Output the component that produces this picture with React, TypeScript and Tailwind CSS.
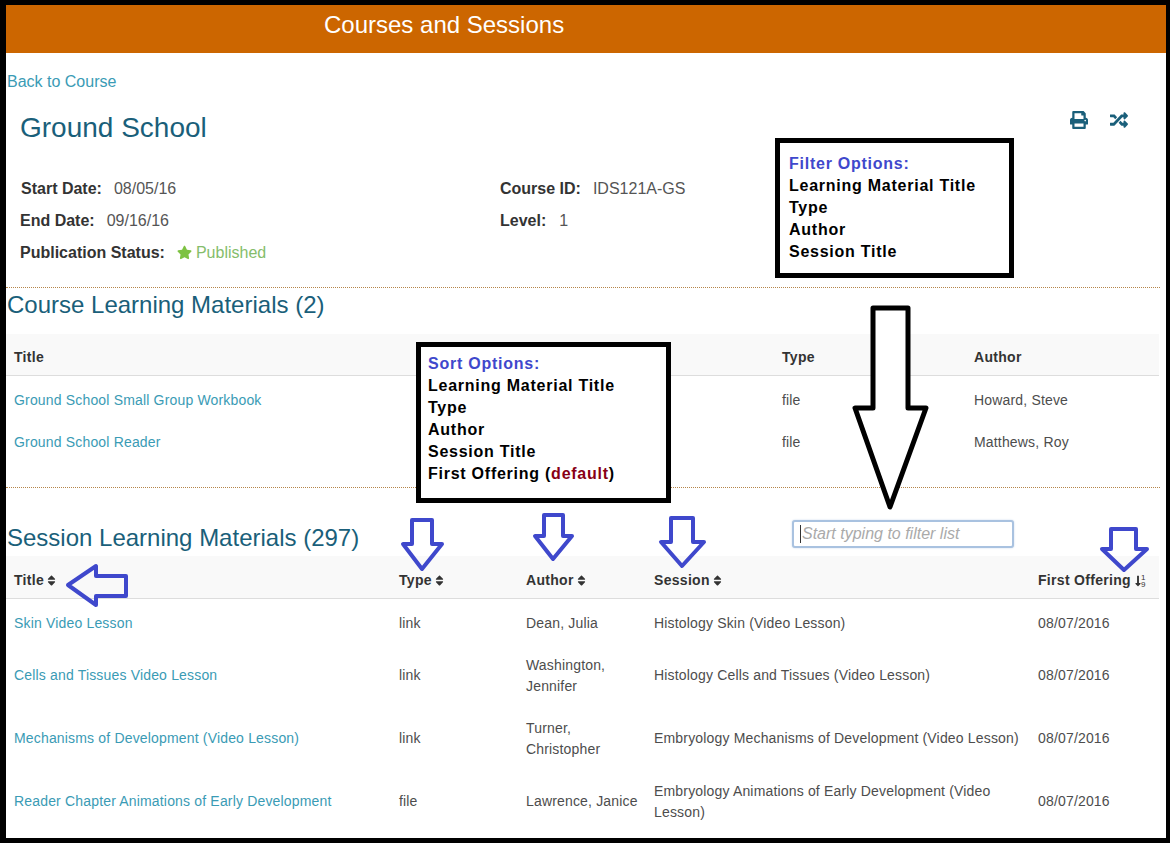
import React from 'react';
import { FaPrint, FaRandom, FaStar, FaSort, FaLongArrowAltDown } from 'react-icons/fa';

const courseMaterials = [
  { title: 'Ground School Small Group Workbook', type: 'file', author: 'Howard, Steve' },
  { title: 'Ground School Reader', type: 'file', author: 'Matthews, Roy' },
];

const sessionMaterials = [
  {
    title: 'Skin Video Lesson',
    type: 'link',
    author: 'Dean, Julia',
    session: 'Histology Skin (Video Lesson)',
    height: 'h-[50px]',
  },
  {
    title: 'Cells and Tissues Video Lesson',
    type: 'link',
    author: 'Washington, Jennifer',
    session: 'Histology Cells and Tissues (Video Lesson)',
    height: 'h-[54px]',
  },
  {
    title: 'Mechanisms of Development (Video Lesson)',
    type: 'link',
    author: 'Turner, Christopher',
    session: 'Embryology Mechanisms of Development (Video Lesson)',
    height: 'h-[72px]',
  },
  {
    title: 'Reader Chapter Animations of Early Development',
    type: 'file',
    author: 'Lawrence, Janice',
    session: 'Embryology Animations of Early Development (Video Lesson)',
    height: 'h-[54px]',
  },
];

function SortHeader({ label }: { label: string }) {
  return (
    <th className="px-2 pt-[8px] text-left font-bold tracking-[0.3px]">
      <span className="inline-flex items-center gap-[3px]">
        {label}
        <FaSort className="h-[13px] w-[9px] text-[#333]" />
      </span>
    </th>
  );
}

function Callout({ className, children }: { className: string; children: React.ReactNode }) {
  return (
    <div
      className={`absolute box-border border-[5px] border-black bg-white text-[16px] font-bold leading-[22px] tracking-[0.75px] text-black ${className}`}
    >
      {children}
    </div>
  );
}

export default function App() {
  return (
    <div className="relative box-border h-[843px] w-[1170px] overflow-hidden bg-black pb-[5px] pl-[6px] pr-[4px] pt-[5px] font-['Liberation_Sans',Arial,sans-serif] text-[14px] text-[#4d4d4d]">
      <div className="h-full overflow-hidden bg-white">
        <div className="flex h-[48px] items-center bg-[#cc6600] pb-[9px] pl-[318px] text-[24px] text-white">
          Courses and Sessions
        </div>

        <a className="ml-px mt-[17px] block h-[24px] text-[16px] leading-[24px] text-[#3a9bb5]">Back to Course</a>

        <div className="mr-[37px] mt-[14px] flex h-[40px] items-center justify-between pl-[14px]">
          <h1 className="text-[28px] text-[#1a5f7a]">Ground School</h1>
          <div className="-mt-[16px] flex items-center gap-[21px] text-[#1a5f7a]">
            <FaPrint className="h-[18px] w-[18px]" />
            <FaRandom className="h-[18px] w-[20px]" />
          </div>
        </div>

        <div className="mt-[25px] grid h-[96px] w-[800px] grid-cols-[480px_1fr] grid-rows-3 pl-[14px] text-[16px] text-[#555]">
          <div className="flex items-center pl-px">
            <b className="mr-[12px] text-[#333]">Start Date:</b>08/05/16
          </div>
          <div className="flex items-center">
            <b className="mr-[12px] text-[#333]">Course ID:</b>IDS121A-GS
          </div>
          <div className="flex items-center">
            <b className="mr-[12px] text-[#333]">End Date:</b>09/16/16
          </div>
          <div className="flex items-center">
            <b className="mr-[13px] text-[#333]">Level:</b>1
          </div>
          <div className="col-span-2 flex items-center">
            <b className="mr-[12px] text-[#333]">Publication Status:</b>
            <FaStar className="-mt-[2px] mr-[4px] h-[15px] w-[15px] text-[#7dc242]" />
            <span className="text-[#85bd6b]">Published</span>
          </div>
        </div>

        <div className="mr-[6px] mt-[18px] border-t border-dotted border-[#b5854a]" />
        <h2 className="ml-px h-[34px] text-[24px] leading-[34px] text-[#1a5f7a]">Course Learning Materials (2)</h2>

        <table className="mt-[12px] w-[1153px] table-fixed border-collapse tracking-[0.17px]">
          <colgroup>
            <col className="w-[768px]" />
            <col className="w-[192px]" />
            <col />
          </colgroup>
          <thead>
            <tr className="h-[41px] border-b border-[#ddd] bg-[#f9f9f9] text-[#333]">
              <th className="px-2 pt-[7px] text-left font-bold tracking-[0.3px]">Title</th>
              <th className="px-2 pt-[7px] text-left font-bold tracking-[0.3px]">Type</th>
              <th className="px-2 pt-[7px] text-left font-bold tracking-[0.3px]">Author</th>
            </tr>
          </thead>
          <tbody>
            {courseMaterials.map((m, i) => (
              <tr key={m.title} className={i === 0 ? 'h-[50px]' : 'h-[34px]'}>
                <td className="px-2 text-[#3a9bb5]">{m.title}</td>
                <td className="px-2">{m.type}</td>
                <td className="px-2">{m.author}</td>
              </tr>
            ))}
          </tbody>
        </table>

        <div className="mr-[6px] mt-[28px] border-t border-dotted border-[#b5854a]" />

        <div className="mt-[32px] flex h-[36px] items-center">
          <h2 className="ml-px w-[785px] shrink-0 text-[24px] text-[#1a5f7a]">Session Learning Materials (297)</h2>
          <div className="relative -mt-[9px]">
            <input
              readOnly
              placeholder="Start typing to filter list"
              className="box-border h-[28px] w-[222px] rounded-[3px] border-2 border-[#a9c2e0] bg-white pl-[8px] text-[16px] shadow-[0_0_2px_#c5d6ea] outline-none placeholder:italic placeholder:text-[#aaa]"
            />
            <span className="absolute left-[8px] top-[5px] h-[18px] w-px bg-[#333]" />
          </div>
        </div>

        <table className="w-[1153px] table-fixed border-collapse tracking-[0.17px]">
          <colgroup>
            <col className="w-[385px]" />
            <col className="w-[127px]" />
            <col className="w-[128px]" />
            <col className="w-[384px]" />
            <col />
          </colgroup>
          <thead>
            <tr className="h-[42px] border-b border-[#ddd] bg-[#f9f9f9] text-[#333]">
              <SortHeader label="Title" />
              <SortHeader label="Type" />
              <SortHeader label="Author" />
              <SortHeader label="Session" />
              <th className="px-2 pt-[8px] text-left font-bold tracking-[0.3px]">
                <span className="inline-flex items-center gap-[4px]">
                  First Offering
                  <span className="inline-flex items-center">
                    <FaLongArrowAltDown className="h-[14px] w-[6px] text-[#333]" />
                    <span className="flex flex-col text-[8px] font-normal leading-[7px] tracking-normal">
                      <span>1</span>
                      <span>9</span>
                    </span>
                  </span>
                </span>
              </th>
            </tr>
          </thead>
          <tbody className="leading-[21px]">
            {sessionMaterials.map((m) => (
              <tr key={m.title} className={m.height}>
                <td className="px-2 text-[#3a9bb5]">{m.title}</td>
                <td className="px-2">{m.type}</td>
                <td className="pl-2 pr-[4px] pt-[1px]">{m.author}</td>
                <td className="px-2 pt-[1px]">{m.session}</td>
                <td className="px-2">08/07/2016</td>
              </tr>
            ))}
          </tbody>
        </table>
      </div>

      {/* annotations drawn over the screenshot */}
      <Callout className="left-[775px] top-[138px] h-[140px] w-[239px] pl-[9px] pt-[10px]">
        <div className="text-[#3f48cc]">Filter Options:</div>
        <div>Learning Material Title</div>
        <div>Type</div>
        <div>Author</div>
        <div>Session Title</div>
      </Callout>

      <Callout className="left-[416px] top-[342px] h-[161px] w-[255px] pl-[7px] pt-[6px]">
        <div className="text-[#3f48cc]">Sort Options:</div>
        <div>Learning Material Title</div>
        <div>Type</div>
        <div>Author</div>
        <div>Session Title</div>
        <div>
          First Offering (<span className="text-[#880015]">default</span>)
        </div>
      </Callout>

      <svg className="pointer-events-none absolute left-0 top-0" width="1170" height="843" fill="none">
        <polygon
          points="873,308 908,308 908,408 926,408 890,507 855,408 873,408"
          fill="#fff"
          stroke="#000"
          strokeWidth="5"
          strokeLinejoin="round"
        />
        <g stroke="#3f48cc" strokeWidth="4" strokeLinejoin="round">
          <polygon points="412,520 432,520 432,544 442,544 422,569 403,544 412,544" />
          <polygon points="544,515 563,515 563,536 572,536 553,559 535,536 544,536" />
          <polygon points="671,518 693,518 693,542 704,542 682,566 661,542 671,542" />
          <polygon points="1111,529 1136,529 1136,549 1147,549 1124,570 1102,549 1111,549" />
          <polygon points="68,585 96,566 96,576 126,576 126,596 96,596 96,605" />
        </g>
      </svg>
    </div>
  );
}
